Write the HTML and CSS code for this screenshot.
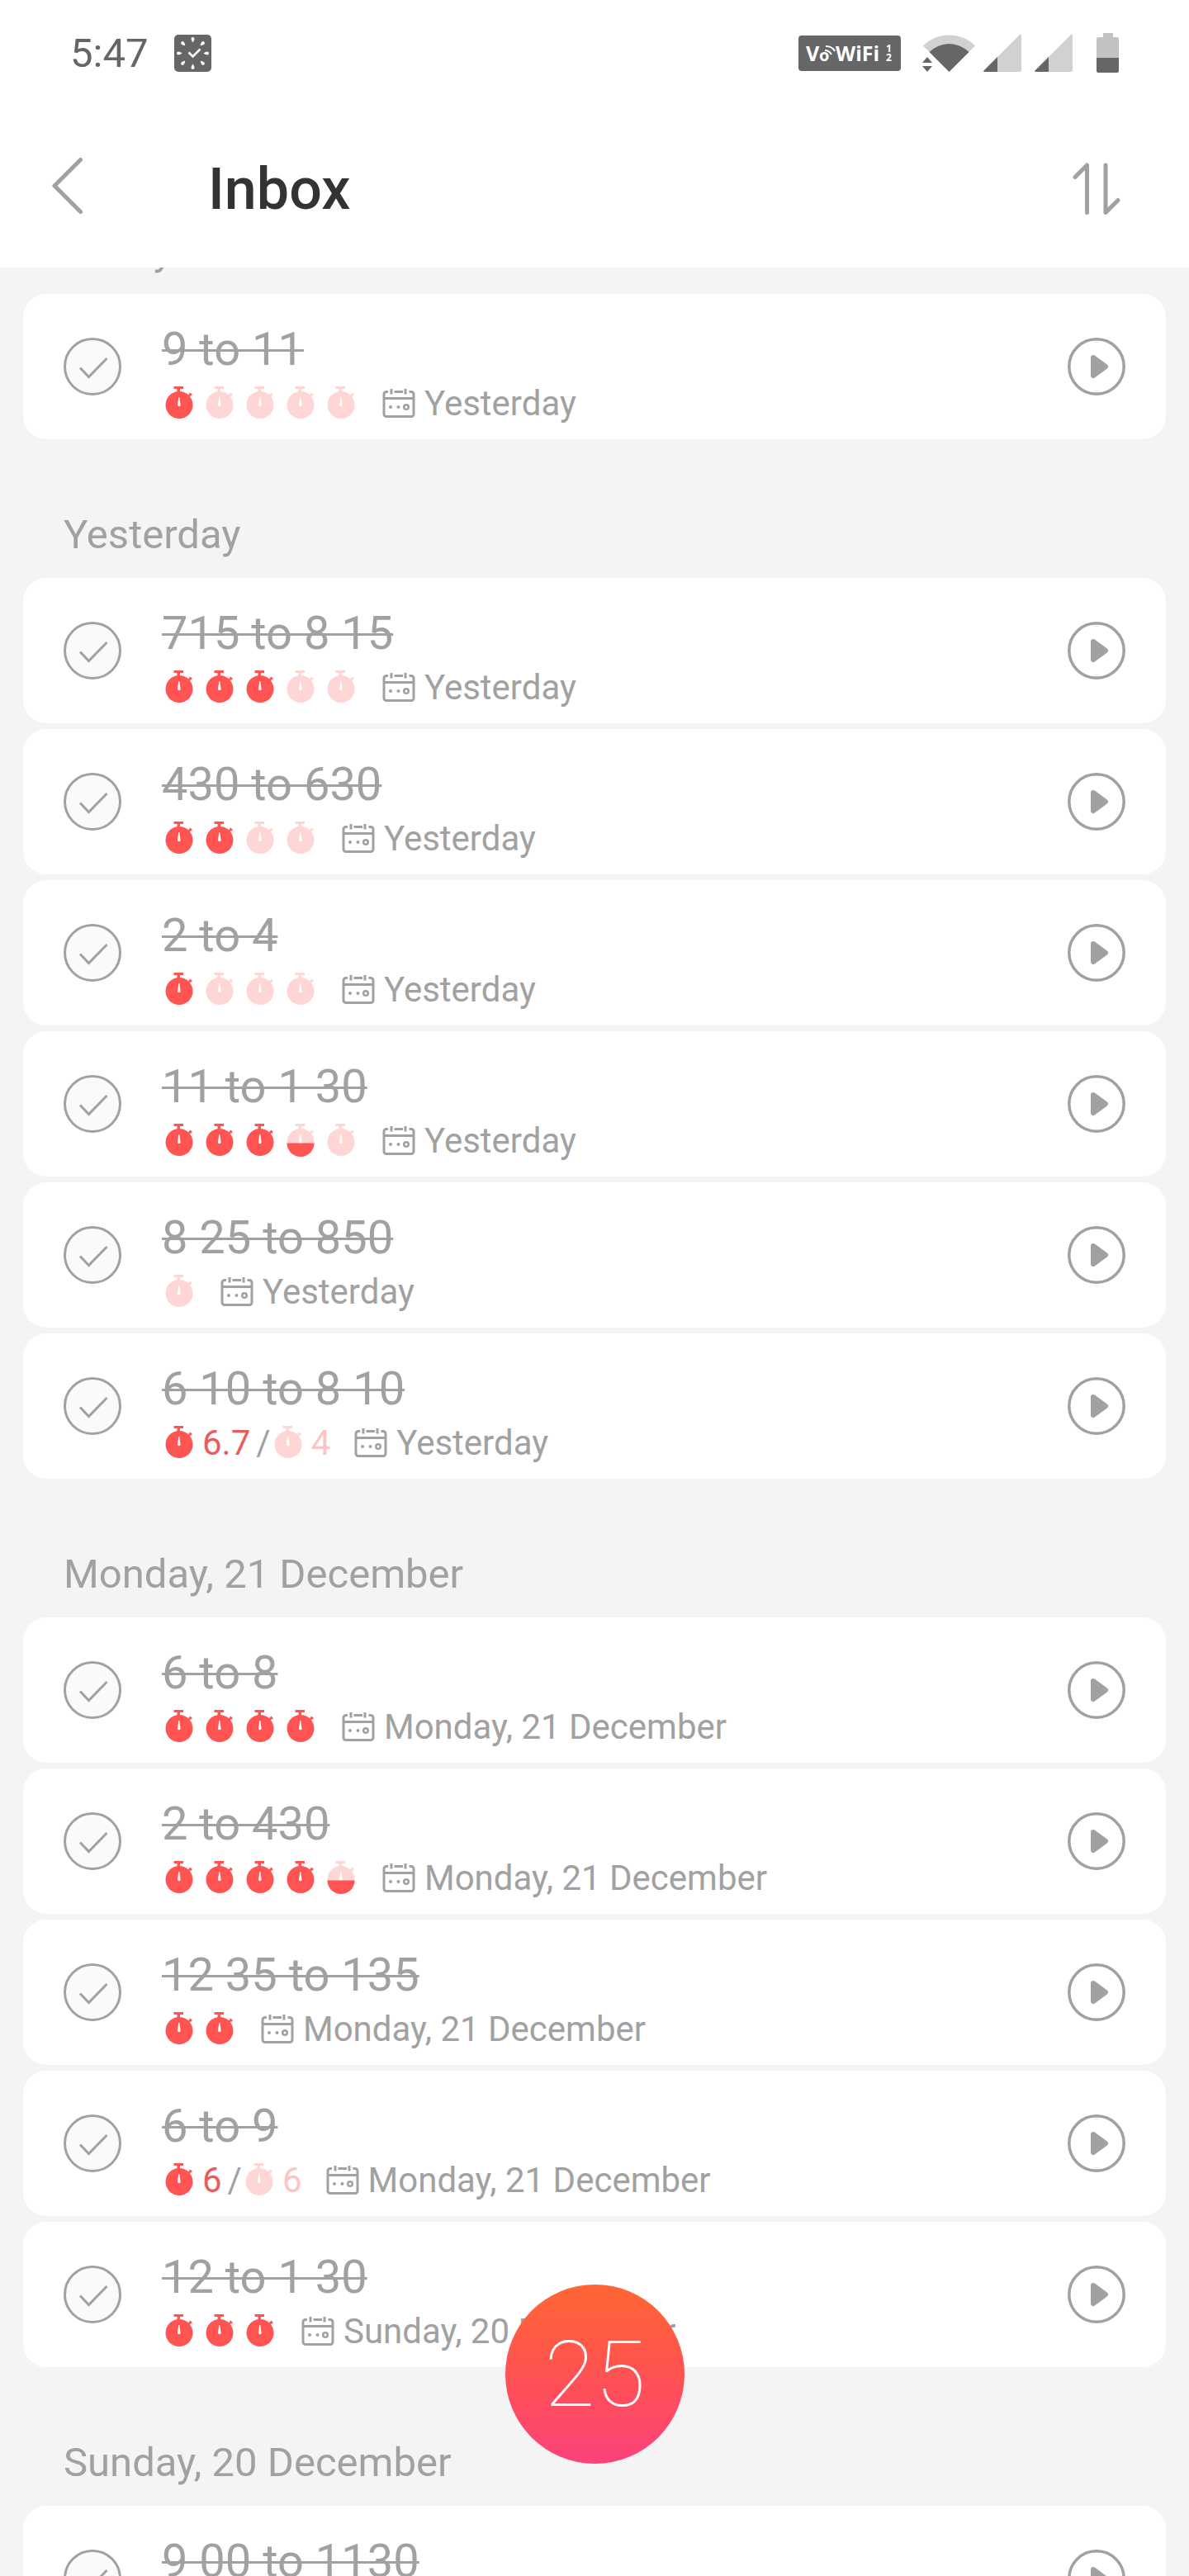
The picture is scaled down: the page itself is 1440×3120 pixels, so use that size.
FILE: index.html
```html
<!DOCTYPE html>
<html lang="en">
<head>
    <meta charset="UTF-8">
    <meta name="viewport" content="width=device-width, initial-scale=1.0">
    <title>Inbox</title>
    <link rel="stylesheet" href="styles.css">
</head>
<body>
    <!-- Shared icons -->
    <svg class="sprite" aria-hidden="true">
        <symbol id="watch" viewBox="0 0 42 42">
            <path d="M14.5 0h11.5v3h-4v5h-3.500v-5h-4z" fill="currentColor"/>
            <path d="M31 13.500L34.500 9.500M33.500 8.500l2.500 2.500" stroke="currentColor" stroke-width="2.500" fill="none"/>
            <circle cx="21" cy="22.500" r="16.500" fill="currentColor"/>
            <path d="M20.300 13h1l1.300 9.500a1.800 1.800 0 0 1-3.600 0z" fill="#ffffff"/>
        </symbol>
        <symbol id="watch-half" viewBox="0 0 42 42">
            <use href="#watch"/>
            <path d="M4.500 23.500h33a16.500 16.500 0 0 1-33 0z" fill="#ff5452"/>
        </symbol>
        <symbol id="calendar" viewBox="0 0 42 42">
            <g fill="none" stroke="currentColor" stroke-width="3">
                <path d="M8 6.500H6a3 3 0 0 0-3 3v24a3 3 0 0 0 3 3h30a3 3 0 0 0 3-3v-24a3 3 0 0 0-3-3h-2.500M15.500 6.500H26M3 14.500h36M12 3v6.500M29 3v6.500"/>
                <circle cx="30" cy="25" r="2.800" stroke-width="2.500"/>
            </g>
            <circle cx="11" cy="25" r="2" fill="currentColor"/>
            <circle cx="20.500" cy="25" r="2" fill="currentColor"/>
        </symbol>
        <symbol id="tick" viewBox="0 0 70 70">
            <path d="M20 36.500L30.500 47.500L52.500 25" fill="none" stroke="currentColor" stroke-width="3"/>
        </symbol>
        <symbol id="play" viewBox="0 0 70 70">
            <circle cx="35" cy="35" r="33.200" fill="none" stroke="currentColor" stroke-width="3.500"/>
            <path d="M31 24L46 35L31 46z" fill="currentColor" stroke="currentColor" stroke-width="6" stroke-linejoin="round"/>
        </symbol>
        <symbol id="signal" viewBox="0 0 46 46">
            <path d="M1 44L44 1q2-1 2 1v42q0 2-2 2H2q-3 0-1-2z" fill="#d1d1d1"/>
            <path d="M17 28v18H2q-3 0-1-2z" fill="#666666"/>
        </symbol>
    </svg>

    <header class="header">
        <div class="status-bar">
            <span class="time">5:47</span>
            <svg class="app-icon" viewBox="0 0 45 45" aria-hidden="true">
                <rect width="45" height="45" rx="5" fill="#666666"/>
                <path d="M17.500 21.500l5 5l9-9" fill="none" stroke="#ffffff" stroke-width="2.500"/>
                <g fill="#ffffff">
                    <path id="drop" d="M22.500 9.500q-2-2.500-2-4.500a2 2 0 0 1 4 0q0 2-2 4.500z"/>
                    <use href="#drop" transform="rotate(45 22.500 22.500)"/>
                    <use href="#drop" transform="rotate(90 22.500 22.500)"/>
                    <use href="#drop" transform="rotate(135 22.500 22.500)"/>
                    <use href="#drop" transform="rotate(180 22.500 22.500)"/>
                    <use href="#drop" transform="rotate(225 22.500 22.500)"/>
                    <use href="#drop" transform="rotate(270 22.500 22.500)"/>
                    <use href="#drop" transform="rotate(315 22.500 22.500)"/>
                </g>
            </svg>
            <div class="status-icons">
                <svg class="vowifi" viewBox="0 0 124 43">
                    <rect width="124" height="43" rx="4" fill="#666666"/>
                    <g fill="#ffffff">
                        <text x="9" y="31" font-size="25">V</text>
                        <text x="25" y="31" font-size="20">o</text>
                        <text x="45" y="31" font-size="25">WiFi</text>
                        <text x="106" y="20" font-size="12">1</text>
                        <text x="106" y="31" font-size="12">2</text>
                    </g>
                    <path d="M32 18q5 0 8 5M33 13q8 0 11 6" fill="none" stroke="#ffffff" stroke-width="2"/>
                </svg>
                <svg class="wifi" viewBox="0 0 64 46" aria-hidden="true">
                    <path d="M32.500 46L1 14.500a44.500 44.500 0 0 1 63 0z" fill="#d1d1d1"/>
                    <path d="M32.500 46L8.500 22a34 34 0 0 1 48 0z" fill="#666666"/>
                    <path d="M0 35l6-7l6 7zM0 39h12l-6 7z" fill="#666666"/>
                </svg>
                <svg class="signal" aria-hidden="true"><use href="#signal"/></svg>
                <svg class="signal" aria-hidden="true"><use href="#signal"/></svg>
                <svg class="battery" viewBox="0 0 27 48" aria-hidden="true">
                    <path d="M8 0h12v5h5q2 0 2 2v23H0V7q0-2 2-2h6z" fill="#c2c2c2"/>
                    <path d="M0 30h27v16q0 2-2 2H2q-2 0-2-2z" fill="#666666"/>
                </svg>
            </div>
        </div>
        <div class="toolbar">
            <button class="icon-button" type="button" aria-label="Back">
                <svg viewBox="0 0 70 70" aria-hidden="true">
                    <path d="M48.500 -0.500L17 31L48.500 62.500" />
                </svg>
            </button>
            <h1>Inbox</h1>
            <button class="icon-button" type="button" aria-label="Sort">
                <svg viewBox="0 0 70 70" aria-hidden="true">
                    <path d="M9 20.500L23.500 6V63.500M46 6V63.500L61 48.500" />
                </svg>
            </button>
        </div>
    </header>

    <main class="tasks">
        <h2>Today</h2>
        <ul>
            <li class="task">
                <span class="check"><input type="checkbox" id="t1" checked><svg><use href="#tick"/></svg></span>
                <div class="info">
                    <label for="t1">9 to 11</label>
                    <div class="meta">
                        <span class="watches"><svg class="done"><use href="#watch"/></svg><svg><use href="#watch"/></svg><svg><use href="#watch"/></svg><svg><use href="#watch"/></svg><svg><use href="#watch"/></svg></span>
                        <span class="date"><svg><use href="#calendar"/></svg>Yesterday</span>
                    </div>
                </div>
                <button class="play" type="button" aria-label="Start"><svg><use href="#play"/></svg></button>
            </li>
        </ul>

        <h2>Yesterday</h2>
        <ul>
            <li class="task">
                <span class="check"><input type="checkbox" id="t2" checked><svg><use href="#tick"/></svg></span>
                <div class="info">
                    <label for="t2">715 to 8 15</label>
                    <div class="meta">
                        <span class="watches"><svg class="done"><use href="#watch"/></svg><svg class="done"><use href="#watch"/></svg><svg class="done"><use href="#watch"/></svg><svg><use href="#watch"/></svg><svg><use href="#watch"/></svg></span>
                        <span class="date"><svg><use href="#calendar"/></svg>Yesterday</span>
                    </div>
                </div>
                <button class="play" type="button" aria-label="Start"><svg><use href="#play"/></svg></button>
            </li>
            <li class="task">
                <span class="check"><input type="checkbox" id="t3" checked><svg><use href="#tick"/></svg></span>
                <div class="info">
                    <label for="t3">430 to 630</label>
                    <div class="meta">
                        <span class="watches"><svg class="done"><use href="#watch"/></svg><svg class="done"><use href="#watch"/></svg><svg><use href="#watch"/></svg><svg><use href="#watch"/></svg></span>
                        <span class="date"><svg><use href="#calendar"/></svg>Yesterday</span>
                    </div>
                </div>
                <button class="play" type="button" aria-label="Start"><svg><use href="#play"/></svg></button>
            </li>
            <li class="task">
                <span class="check"><input type="checkbox" id="t4" checked><svg><use href="#tick"/></svg></span>
                <div class="info">
                    <label for="t4">2 to 4</label>
                    <div class="meta">
                        <span class="watches"><svg class="done"><use href="#watch"/></svg><svg><use href="#watch"/></svg><svg><use href="#watch"/></svg><svg><use href="#watch"/></svg></span>
                        <span class="date"><svg><use href="#calendar"/></svg>Yesterday</span>
                    </div>
                </div>
                <button class="play" type="button" aria-label="Start"><svg><use href="#play"/></svg></button>
            </li>
            <li class="task">
                <span class="check"><input type="checkbox" id="t5" checked><svg><use href="#tick"/></svg></span>
                <div class="info">
                    <label for="t5">11 to 1 30</label>
                    <div class="meta">
                        <span class="watches"><svg class="done"><use href="#watch"/></svg><svg class="done"><use href="#watch"/></svg><svg class="done"><use href="#watch"/></svg><svg><use href="#watch-half"/></svg><svg><use href="#watch"/></svg></span>
                        <span class="date"><svg><use href="#calendar"/></svg>Yesterday</span>
                    </div>
                </div>
                <button class="play" type="button" aria-label="Start"><svg><use href="#play"/></svg></button>
            </li>
            <li class="task">
                <span class="check"><input type="checkbox" id="t6" checked><svg><use href="#tick"/></svg></span>
                <div class="info">
                    <label for="t6">8 25 to 850</label>
                    <div class="meta">
                        <span class="watches"><svg><use href="#watch"/></svg></span>
                        <span class="date"><svg><use href="#calendar"/></svg>Yesterday</span>
                    </div>
                </div>
                <button class="play" type="button" aria-label="Start"><svg><use href="#play"/></svg></button>
            </li>
            <li class="task">
                <span class="check"><input type="checkbox" id="t7" checked><svg><use href="#tick"/></svg></span>
                <div class="info">
                    <label for="t7">6 10 to 8 10</label>
                    <div class="meta">
                        <span class="watches done"><svg class="done"><use href="#watch"/></svg><span class="count">6.7</span></span>
                        <span class="slash">/</span>
                        <span class="watches"><svg><use href="#watch"/></svg><span class="count">4</span></span>
                        <span class="date"><svg><use href="#calendar"/></svg>Yesterday</span>
                    </div>
                </div>
                <button class="play" type="button" aria-label="Start"><svg><use href="#play"/></svg></button>
            </li>
        </ul>

        <h2>Monday, 21 December</h2>
        <ul>
            <li class="task">
                <span class="check"><input type="checkbox" id="t8" checked><svg><use href="#tick"/></svg></span>
                <div class="info">
                    <label for="t8">6 to 8</label>
                    <div class="meta">
                        <span class="watches"><svg class="done"><use href="#watch"/></svg><svg class="done"><use href="#watch"/></svg><svg class="done"><use href="#watch"/></svg><svg class="done"><use href="#watch"/></svg></span>
                        <span class="date"><svg><use href="#calendar"/></svg>Monday, 21 December</span>
                    </div>
                </div>
                <button class="play" type="button" aria-label="Start"><svg><use href="#play"/></svg></button>
            </li>
            <li class="task">
                <span class="check"><input type="checkbox" id="t9" checked><svg><use href="#tick"/></svg></span>
                <div class="info">
                    <label for="t9">2 to 430</label>
                    <div class="meta">
                        <span class="watches"><svg class="done"><use href="#watch"/></svg><svg class="done"><use href="#watch"/></svg><svg class="done"><use href="#watch"/></svg><svg class="done"><use href="#watch"/></svg><svg><use href="#watch-half"/></svg></span>
                        <span class="date"><svg><use href="#calendar"/></svg>Monday, 21 December</span>
                    </div>
                </div>
                <button class="play" type="button" aria-label="Start"><svg><use href="#play"/></svg></button>
            </li>
            <li class="task">
                <span class="check"><input type="checkbox" id="t10" checked><svg><use href="#tick"/></svg></span>
                <div class="info">
                    <label for="t10">12 35 to 135</label>
                    <div class="meta">
                        <span class="watches"><svg class="done"><use href="#watch"/></svg><svg class="done"><use href="#watch"/></svg></span>
                        <span class="date"><svg><use href="#calendar"/></svg>Monday, 21 December</span>
                    </div>
                </div>
                <button class="play" type="button" aria-label="Start"><svg><use href="#play"/></svg></button>
            </li>
            <li class="task">
                <span class="check"><input type="checkbox" id="t11" checked><svg><use href="#tick"/></svg></span>
                <div class="info">
                    <label for="t11">6 to 9</label>
                    <div class="meta">
                        <span class="watches done"><svg class="done"><use href="#watch"/></svg><span class="count">6</span></span>
                        <span class="slash">/</span>
                        <span class="watches"><svg><use href="#watch"/></svg><span class="count">6</span></span>
                        <span class="date"><svg><use href="#calendar"/></svg>Monday, 21 December</span>
                    </div>
                </div>
                <button class="play" type="button" aria-label="Start"><svg><use href="#play"/></svg></button>
            </li>
            <li class="task">
                <span class="check"><input type="checkbox" id="t12" checked><svg><use href="#tick"/></svg></span>
                <div class="info">
                    <label for="t12">12 to 1 30</label>
                    <div class="meta">
                        <span class="watches"><svg class="done"><use href="#watch"/></svg><svg class="done"><use href="#watch"/></svg><svg class="done"><use href="#watch"/></svg></span>
                        <span class="date"><svg><use href="#calendar"/></svg>Sunday, 20 December</span>
                    </div>
                </div>
                <button class="play" type="button" aria-label="Start"><svg><use href="#play"/></svg></button>
            </li>
        </ul>

        <h2>Sunday, 20 December</h2>
        <ul>
            <li class="task">
                <span class="check"><input type="checkbox" id="t13" checked><svg><use href="#tick"/></svg></span>
                <div class="info">
                    <label for="t13">9 00 to 1130</label>
                    <div class="meta"></div>
                </div>
                <button class="play" type="button" aria-label="Start"><svg><use href="#play"/></svg></button>
            </li>
        </ul>
    </main>

    <button class="timer" type="button">25</button>
</body>
</html>
```

FILE: styles.css
```css
* {
    box-sizing: border-box;
}

body {
    font-family: Roboto, sans-serif;
    background-color: #f4f4f4;
    color: #a1a1a1;
    margin: 0;
    height: 100vh;
    overflow: hidden;
}

button {
    padding: 0;
    border: none;
    background: none;
    color: inherit;
    font-family: inherit;
    cursor: pointer;
}

svg {
    display: block;
    flex: none;
}

.sprite {
    position: absolute;
    width: 0;
    height: 0;
}

.header {
    position: fixed;
    top: 0;
    left: 0;
    right: 0;
    z-index: 1;
    background-color: #ffffff;
}

.status-bar {
    display: flex;
    align-items: center;
    height: 128px;
    padding: 0 85px;
    color: #666666;
}

.time {
    font-size: 49px;
    line-height: 57px;
}

.app-icon {
    width: 45px;
    height: 45px;
    margin-left: 32px;
}

.status-icons {
    display: flex;
    align-items: center;
    margin-left: auto;
}

.vowifi {
    width: 124px;
    height: 43px;
    font-family: "Open Sans", sans-serif;
    font-weight: 700;
}

.wifi {
    width: 64px;
    height: 46px;
    margin: 0 10px 0 26px;
}

.signal {
    width: 46px;
    height: 46px;
    margin-right: 16px;
}

.battery {
    width: 27px;
    height: 48px;
    margin-left: 13px;
}

.toolbar {
    display: flex;
    align-items: center;
    height: 196px;
    padding: 6px 77px 0 49px;
}

h1 {
    flex: 1;
    margin: 0 0 0 133px;
    color: #333333;
    font-size: 70px;
    font-weight: 500;
    line-height: 82px;
}

.icon-button svg {
    width: 70px;
    height: 70px;
    overflow: visible;
    fill: none;
    stroke: #a1a1a1;
    stroke-width: 5;
    stroke-linecap: round;
    stroke-linejoin: round;
}

/* Task list */
.tasks {
    padding: 188px 28px 0;
}

h2 {
    margin: 0;
    padding: 87px 49px 24px;
    font-size: 49px;
    font-weight: 400;
    line-height: 57px;
}

ul {
    display: flex;
    flex-direction: column;
    gap: 7px;
    margin: 0;
    padding: 0;
    list-style: none;
}

.task {
    display: flex;
    align-items: center;
    gap: 49px;
    padding: 0 49px;
    background-color: #ffffff;
    border-radius: 28px;
}

.check {
    display: grid;
    width: 70px;
    height: 70px;
}

.check input,
.check svg {
    grid-area: 1 / 1;
    width: 70px;
    height: 70px;
    margin: 0;
}

.check input {
    appearance: none;
    border: 3px solid #a1a1a1;
    border-radius: 50%;
    background-color: #fafafa;
}

.check svg {
    pointer-events: none;
}

.info {
    flex: 1;
    padding: 34px 0 19px;
}

.info label {
    display: block;
    width: fit-content;
    margin-bottom: 8px;
    font-size: 56px;
    line-height: 66px;
    text-decoration: line-through;
    text-decoration-thickness: 3px;
}

.meta {
    display: flex;
    align-items: center;
    height: 49px;
    font-size: 42px;
    line-height: 49px;
}

.meta svg {
    width: 42px;
    height: 42px;
}

.watches {
    display: flex;
    align-items: center;
    gap: 7px;
    color: #ffd6d6;
}

.watches .done {
    color: #ff5452;
}

.count {
    color: #fcc4c4;
}

.done .count {
    color: #ea5c5c;
}

.slash {
    margin-left: 7px;
}

.date {
    display: flex;
    align-items: center;
    gap: 10px;
    margin-left: 28px;
}

.play svg {
    width: 70px;
    height: 70px;
}

/* Floating timer */
.timer {
    position: fixed;
    bottom: 136px;
    left: calc(50% - 108px);
    z-index: 2;
    width: 217px;
    height: 217px;
    border-radius: 50%;
    background: linear-gradient(#ff6633, #ff5252 50%, #fc427b);
    color: #ffffff;
    font-size: 112px;
    font-weight: 100;
}
```
